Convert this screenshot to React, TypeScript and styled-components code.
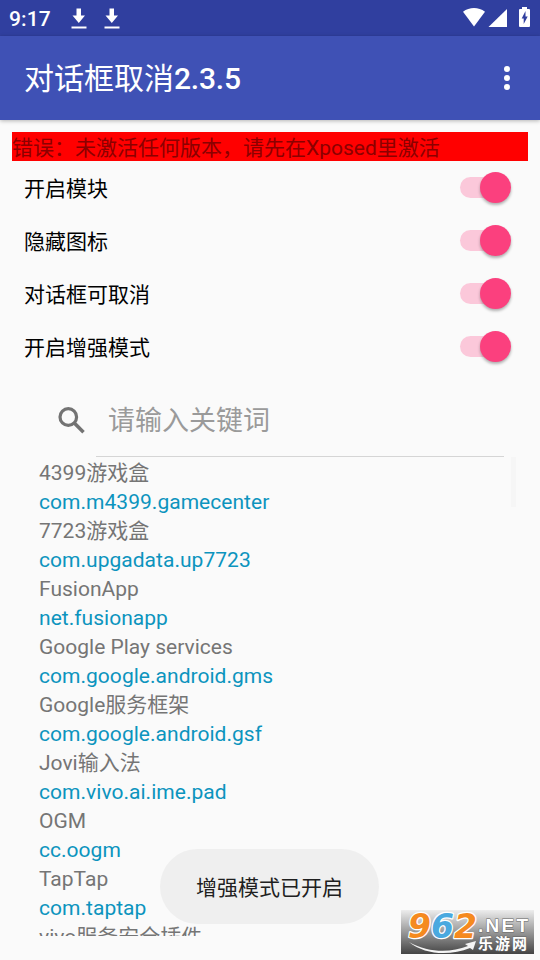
import React from "react";
import styled, { createGlobalStyle } from "styled-components";

const GlobalStyle = createGlobalStyle`
  * { box-sizing: border-box; }
  body {
    margin: 0;
    background: #fafafa;
    font-family: Roboto, "Noto Sans CJK SC", sans-serif;
  }
`;

const Screen = styled.div`
  position: relative;
  width: 540px;
  height: 960px;
  overflow: hidden;
  display: flex;
  flex-direction: column;
  background: #fafafa;
`;

const StatusBar = styled.header`
  height: 36px;
  flex: none;
  display: flex;
  align-items: center;
  padding: 0 9px;
  background: #303f9f;
  color: #fff;
`;

const Clock = styled.span`
  width: 61px;
  font-size: 21px;
  font-weight: 500;
  line-height: 36px;
  letter-spacing: 0.1px;
  padding-top: 1px;
`;

const Notifications = styled.div`
  display: flex;
  gap: 15px;
`;

const SystemIcons = styled.div`
  margin-left: auto;
  height: 36px;
`;

const AppBar = styled.div`
  height: 84px;
  flex: none;
  display: flex;
  align-items: center;
  justify-content: space-between;
  padding: 0 30px 0 24px;
  background: #3f51b5;
  box-shadow: 0 1px 4px rgba(0, 0, 0, 0.28);
  color: #fff;
`;

const Title = styled.h1`
  margin: 0;
  padding-top: 2px;
  font-size: 30px;
  font-weight: 400;
  line-height: 42px;
`;

const Version = styled.span`
  font-weight: 500;
  letter-spacing: -0.2px;
`;

const MenuDots = styled.div`
  display: flex;
  flex-direction: column;
  gap: 3px;
`;

const Dot = styled.i`
  width: 6px;
  height: 6px;
  border-radius: 50%;
  background: #fff;
`;

const Content = styled.main`
  padding: 12px 12px 0;
  display: flex;
  flex-direction: column;
`;

const ErrorBanner = styled.div`
  height: 29px;
  line-height: 32px;
  font-size: 21px;
  background: #ff0000;
  color: #8b0000;
  white-space: nowrap;
`;

const SwitchRow = styled.div`
  height: 53px;
  display: flex;
  align-items: center;
  justify-content: space-between;
  padding: 0 17px 0 12px;
  font-size: 21px;
  color: #000;
`;

const SwitchLabel = styled.span`
  line-height: 29px;
  padding-top: 4px;
`;

const Track = styled.div`
  width: 51px;
  height: 21px;
  border-radius: 11px;
  background: linear-gradient(90deg, #fbc8da 40px, transparent 40px);
  display: flex;
  align-items: center;
  justify-content: flex-end;
`;

const Thumb = styled.div`
  width: 31px;
  height: 31px;
  flex: none;
  border-radius: 50%;
  background: #fb407e;
  box-shadow: 0 2px 3px rgba(0, 0, 0, 0.3);
`;

const SearchBox = styled.div`
  height: 84px;
  display: flex;
  padding: 0 24px 0 43px;
`;

const SearchIcon = styled.svg`
  width: 41px;
  height: 36px;
  margin-top: 29px;
  flex: none;
`;

const SearchField = styled.div`
  flex: 1;
  padding-left: 12px;
  line-height: 96px;
  font-size: 27px;
  color: #9a9a9a;
  border-bottom: 1px solid #d5d5d5;
`;

const ListArea = styled.div`
  height: 479px;
  display: flex;
  justify-content: space-between;
  overflow: hidden;
  padding: 1px 12px 0 27px;
`;

const AppList = styled.div`
  display: flex;
  flex-direction: column;
`;

const AppName = styled.div`
  height: 29px;
  line-height: 30px;
  font-size: 21px;
  color: #757575;
  white-space: nowrap;
`;

const PackageName = styled(AppName)`
  letter-spacing: 0.03px;
  color: #0c94be;
`;

const ScrollThumb = styled.div`
  width: 5px;
  height: 50px;
  margin-top: -1px;
  background: #f6f6f6;
`;

const Toast = styled.div`
  position: absolute;
  left: 160px;
  top: 849px;
  width: 219px;
  height: 75px;
  border-radius: 38px;
  background: #efefef;
  color: #202020;
  font-size: 21px;
  line-height: 79px;
  text-align: center;
`;

const Watermark = styled.svg`
  position: absolute;
  left: 401px;
  top: 910px;
`;

const switches = ["开启模块", "隐藏图标", "对话框可取消", "开启增强模式"];

const apps = [
  ["4399游戏盒", "com.m4399.gamecenter"],
  ["7723游戏盒", "com.upgadata.up7723"],
  ["FusionApp", "net.fusionapp"],
  ["Google Play services", "com.google.android.gms"],
  ["Google服务框架", "com.google.android.gsf"],
  ["Jovi输入法", "com.vivo.ai.ime.pad"],
  ["OGM", "cc.oogm"],
  ["TapTap", "com.taptap"],
  ["vivo服务安全插件", ""],
];

const DownloadIcon = () => (
  <svg width="18" height="36" viewBox="0 0 18 36" fill="#fff">
    <path d="M6.500 8.500h4.500v7h4l-6.200 7.400L2.500 15.500h4z" />
    <path d="M1.500 26.500h15v2h-15z" />
  </svg>
);

const Logo = () => (
  <Watermark width="133" height="44" viewBox="0 0 133 44">
    <defs>
      <linearGradient id="shade" x1="0" y1="0" x2="0" y2="1">
        <stop offset="0" stopColor="#ededed" />
        <stop offset="0.5" stopColor="#999" />
        <stop offset="1" stopColor="#444" />
      </linearGradient>
    </defs>
    <rect width="133" height="44" fill="url(#shade)" />
    <path d="M8 32C28 43 49 43 67 36l-3-2 11-3-3 9-3-2C49 46 24 45 8 32z" fill="#f4f4f4" />
    <text
      x="7"
      y="28"
      fontFamily="DejaVu Sans"
      fontWeight="bold"
      fontStyle="italic"
      fontSize="33"
      stroke="#fff"
      strokeWidth="2.5"
      paintOrder="stroke"
      strokeLinejoin="round"
      fill="#f58a1f"
    >
      9<tspan fill="#4aa9df">6</tspan>2
    </text>
    <g fill="#fff" stroke="#666" strokeWidth="1" paintOrder="stroke" fontWeight="bold">
      <text x="77" y="22" fontFamily="Liberation Sans" fontSize="19" letterSpacing="2.3">.NET</text>
      <text x="77" y="39" fontFamily="Noto Sans CJK SC" fontSize="15" letterSpacing="2">乐游网</text>
    </g>
  </Watermark>
);

export default function App() {
  return (
    <Screen>
      <GlobalStyle />
      <StatusBar>
        <Clock>9:17</Clock>
        <Notifications>
          <DownloadIcon />
          <DownloadIcon />
        </Notifications>
        <SystemIcons>
          <svg width="70" height="36" viewBox="0 0 70 36" fill="#fff">
            <path d="M2 11.700C8.500 6.900 17.500 6.900 24 11.700L13 26.500z" />
            <path d="M46 9v18H27.500z" />
            <path
              fillRule="evenodd"
              d="M61 7h5v2h2q1 0 1 1v16q0 1-1 1H59q-1 0-1-1V10q0-1 1-1h2zM64.500 11l-3.800 7.500h2V24l4-7.500h-2.200z"
            />
          </svg>
        </SystemIcons>
      </StatusBar>
      <AppBar>
        <Title>
          对话框取消<Version>2.3.5</Version>
        </Title>
        <MenuDots>
          <Dot />
          <Dot />
          <Dot />
        </MenuDots>
      </AppBar>
      <Content>
        <ErrorBanner>错误：未激活任何版本，请先在Xposed里激活</ErrorBanner>
        {switches.map((label) => (
          <SwitchRow key={label}>
            <SwitchLabel>{label}</SwitchLabel>
            <Track>
              <Thumb />
            </Track>
          </SwitchRow>
        ))}
        <SearchBox>
          <SearchIcon viewBox="0 0 41 36" fill="none" stroke="#737373">
            <circle cx="13.300" cy="15" r="8.300" strokeWidth="3.200" />
            <path d="M19.300 21l9.200 9.200" strokeWidth="3.600" />
          </SearchIcon>
          <SearchField>请输入关键词</SearchField>
        </SearchBox>
        <ListArea>
          <AppList>
            {apps.map(([name, pkg]) => (
              <React.Fragment key={name}>
                <AppName>{name}</AppName>
                {pkg && <PackageName>{pkg}</PackageName>}
              </React.Fragment>
            ))}
          </AppList>
          <ScrollThumb />
        </ListArea>
      </Content>
      <Toast>增强模式已开启</Toast>
      <Logo />
    </Screen>
  );
}
